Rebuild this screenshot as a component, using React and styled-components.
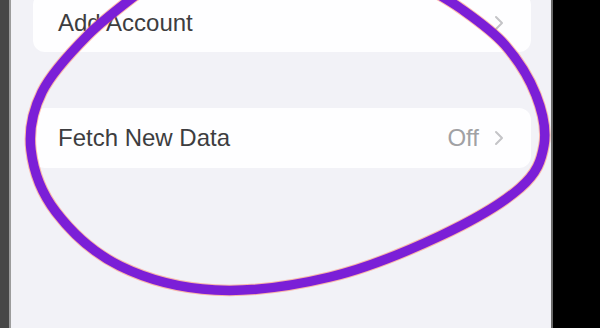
import React from "react";
import styled, { createGlobalStyle } from "styled-components";

const GlobalStyle = createGlobalStyle`
  html, body {
    margin: 0;
    padding: 0;
    background: #000;
  }
  #root {
    width: 600px;
    height: 328px;
  }
`;

const Frame = styled.div`
  position: relative;
  display: flex;
  width: 600px;
  height: 328px;
  overflow: hidden;
  font-family: "Liberation Sans", Arial, sans-serif;
`;

const Bezel = styled.div`
  width: ${(p) => p.w}px;
  flex: none;
  background: ${(p) => p.color};
`;

const Screen = styled.div`
  flex: 1;
  background: #f2f2f7;
  padding: 0 20px 0 22px;
  display: flex;
  flex-direction: column;
`;

const Group = styled.div`
  background: #fefeff;
  border-radius: 12px;
  margin-top: ${(p) => p.top}px;
`;

const Row = styled.div`
  display: flex;
  align-items: center;
  height: ${(p) => p.h}px;
  padding: 0 27px 0 25px;
`;

const Label = styled.div`
  flex: 1;
  font-size: 24px;
  color: #3d3d40;
`;

const Value = styled.div`
  font-size: 24px;
  color: #a1a1a4;
  margin-right: 15px;
`;

const Chevron = () => (
  <svg width="10" height="16" viewBox="0 0 10 16">
    <path
      d="M2 2 L8 8 L2 14"
      fill="none"
      stroke="#c4c4c7"
      strokeWidth="2"
      strokeLinecap="round"
      strokeLinejoin="round"
    />
  </svg>
);

const Overlay = styled.svg`
  position: absolute;
  left: 0;
  top: 0;
  pointer-events: none;
`;

// hand drawn loop, points read off the screenshot
const loop = [
  [420, -16], [460, 8], [505, 45], [536, 95], [544, 145], [520, 188],
  [440, 236], [330, 277], [215, 290], [120, 266], [56, 212], [31, 150],
  [42, 92], [88, 35], [145, -12],
];

function smoothPath(pts) {
  let d = `M ${pts[0][0]} ${pts[0][1]}`;
  for (let i = 0; i < pts.length - 1; i++) {
    const p0 = pts[i - 1] || pts[i];
    const p1 = pts[i];
    const p2 = pts[i + 1];
    const p3 = pts[i + 2] || p2;
    const c1 = [p1[0] + (p2[0] - p0[0]) / 6, p1[1] + (p2[1] - p0[1]) / 6];
    const c2 = [p2[0] - (p3[0] - p1[0]) / 6, p2[1] - (p3[1] - p1[1]) / 6];
    d += ` C ${c1[0]} ${c1[1]}, ${c2[0]} ${c2[1]}, ${p2[0]} ${p2[1]}`;
  }
  return d;
}

const Scribble = () => {
  const d = smoothPath(loop);
  return (
    <Overlay width="600" height="328" viewBox="0 0 600 328">
      <path d={d} fill="none" stroke="#ff7a5c" strokeOpacity="0.5" strokeWidth="11.5" strokeLinecap="round" />
      <path d={d} fill="none" stroke="#7b1fd7" strokeWidth="9.5" strokeLinecap="round" />
    </Overlay>
  );
};

export default function App() {
  return (
    <>
      <GlobalStyle />
      <Frame>
        <Bezel w={9} color="#474747" />
        <Bezel w={2} color="#9c9c9c" />
        <Screen>
          <Group top={-7}>
            <Row h={59}>
              <Label>Add Account</Label>
              <Chevron />
            </Row>
          </Group>
          <Group top={56}>
            <Row h={60}>
              <Label>Fetch New Data</Label>
              <Value>Off</Value>
              <Chevron />
            </Row>
          </Group>
        </Screen>
        <Bezel w={2} color="#6a6a6a" />
        <Bezel w={47} color="#000" />
        <Scribble />
      </Frame>
    </>
  );
}
